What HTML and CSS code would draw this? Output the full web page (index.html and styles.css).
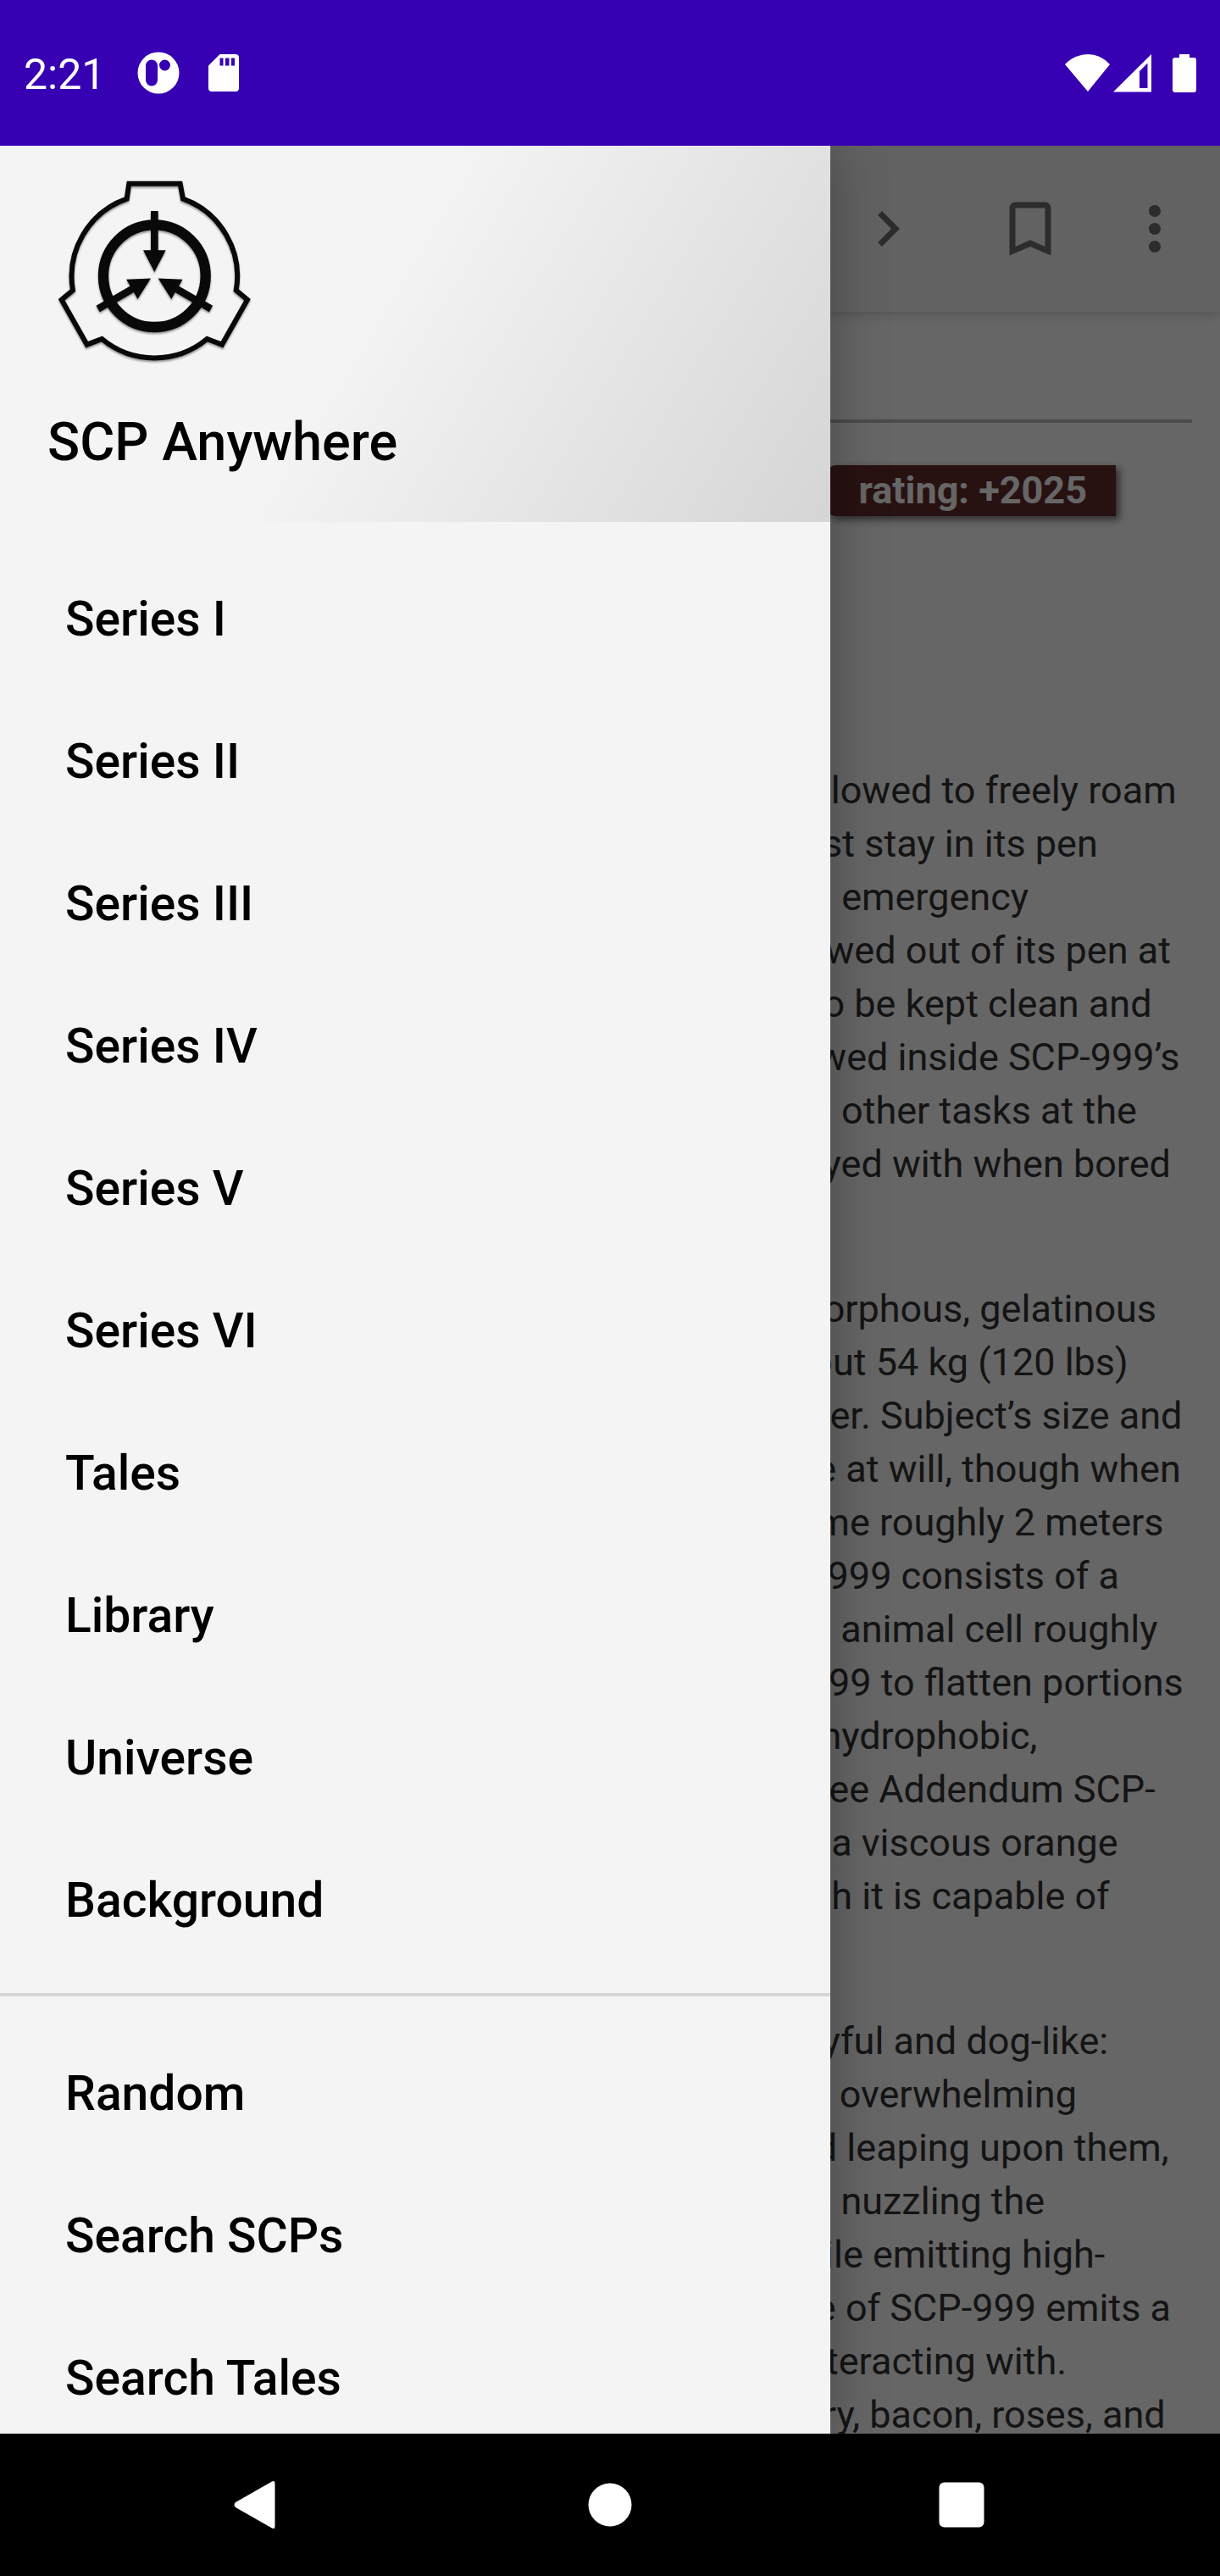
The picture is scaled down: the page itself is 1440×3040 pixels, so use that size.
FILE: index.html
```html
<!DOCTYPE html>
<html lang="en">
<head>
<meta charset="utf-8">
<meta name="viewport" content="width=device-width, initial-scale=1">
<title>SCP Anywhere</title>
<link rel="stylesheet" href="styles.css">
</head>
<body>
<header class="status">
  <span class="status-time">2:21</span>
  <svg class="status-app" width="50" height="50" viewBox="0 0 50 50" aria-hidden="true"><path fill="#fff" fill-rule="evenodd" d="M25 .5a24.500 24.500 0 1 0 0 49a24.500 24.500 0 1 0 0-49zM17 9.500a7 7 0 0 1 7 7v17a7 7 0 0 1-14 0v-17a7 7 0 0 1 7-7zM32.500 9.500a6.500 6.500 0 1 1 0 13a6.500 6.500 0 1 1 0-13z"/></svg>
  <svg class="status-card" width="36" height="46" viewBox="0 0 36 46" aria-hidden="true"><path fill="#fff" fill-rule="evenodd" d="M13.500 1H32a4 4 0 0 1 4 4V41a4 4 0 0 1-4 4H4a4 4 0 0 1-4-4V14.500zM13.500 5.500v9h4v-9zM20 5.500v9h4.500v-9zM27 5.500v9h4v-9z"/></svg>
  <span class="status-gap"></span>
  <svg width="54" height="46" viewBox="0 0 54 46" aria-hidden="true"><path fill="#fff" d="M0 13Q12 1 27 1T53 13L27 45z"/></svg>
  <svg class="status-signal" width="46" height="46" viewBox="0 0 46 46" aria-hidden="true"><path fill="#fff" fill-rule="evenodd" d="M0 45.500L45 1v44.500zM31 21v20h9.500V11.500z"/></svg>
  <svg class="status-battery" width="28" height="46" viewBox="0 0 28 46" aria-hidden="true"><path fill="#fff" d="M8 1h12v4h5a3 3 0 0 1 3 3V43a3 3 0 0 1-3 3H3a3 3 0 0 1-3-3V8a3 3 0 0 1 3-3h5z"/></svg>
</header>

<div class="stage">
  <main class="page">
    <div class="appbar">
      <button class="action" type="button" aria-label="Next"><svg width="84" height="84" viewBox="0 0 24 24"><path d="M10 6L8.590 7.410 13.170 12l-4.580 4.590L10 18l6-6z"/></svg></button>
      <button class="action" type="button" aria-label="Bookmark"><svg width="84" height="84" viewBox="0 0 24 24"><path d="M17 3H7c-1.100 0-1.990.9-1.990 2L5 21l7-3 7 3V5c0-1.100-.9-2-2-2zm0 15l-5-2.180L7 18V5h10v13z"/></svg></button>
      <button class="action action-more" type="button" aria-label="More options"><svg width="84" height="84" viewBox="0 0 24 24"><path d="M12 8c1.100 0 2-.9 2-2s-.9-2-2-2-2 .9-2 2 .9 2 2 2zm0 2c-1.100 0-2 .9-2 2s.9 2 2 2 2-.9 2-2-.9-2-2-2zm0 6c-1.100 0-2 .9-2 2s.9 2 2 2 2-.9 2-2-.9-2-2-2z"/></svg></button>
    </div>
    <article class="article">
      <h1 class="article-title">SCP-999</h1>
      <div class="article-top">
        <span class="rating">rating: +2025</span>
        <p class="article-item"><b>Item #:</b> SCP-999</p>
      </div>
      <p><b>Object Class:</b> Safe</p>
      <p><b>Special Containment Procedures:</b> SCP-999 is allowed to freely roam<br>
      the facility should it desire to, but otherwise must stay in its pen<br>
      for its own well-being. In the case of an ongoing emergency<br>
      lockdown at the facility, subject is not often allowed out of its pen at<br>
      night or off facility grounds at any time. Pen is to be kept clean and<br>
      food replaced twice daily. All personnel are allowed inside SCP-999’s<br>
      holding area, but only if they are not assigned to other tasks at the<br>
      time, or if they are on break. Subject is to be played with when bored<br>
      and spoken to in a calm, non-threatening tone.</p>
      <p><b>Description:</b> SCP-999 appears to be a large, amorphous, gelatinous<br>
      mass of translucent orange slime, weighing about 54 kg (120 lbs)<br>
      with a consistency similar to that of peanut butter. Subject’s size and<br>
      mass stay the same, but it can change its shape at will, though when<br>
      at rest, SCP-999 becomes a rounded, oblate dome roughly 2 meters<br>
      wide and 1 meter in height. The surface of SCP-999 consists of a<br>
      thin, transparent membrane similar to that of an animal cell roughly<br>
      0.5 cm thick, but is quite elastic, allowing SCP-999 to flatten portions<br>
      of its bulk up to 2 cm long. This surface is also hydrophobic,<br>
      though it can willingly absorb ordinary liquids (see Addendum SCP-<br>
      999-A). The interior of SCP-999 is composed of a viscous orange<br>
      substance with unclassified components, though it is capable of<br>
      digesting organic matter.</p>
      <p>Subject’s temperament is best described as playful and dog-like:<br>
      when approached, SCP-999 will often react with overwhelming<br>
      elation, slithering over to the nearest person and leaping upon them,<br>
      “hugging” them with a pair of pseudopods while nuzzling the<br>
      person’s face with a third pseudopod, all the while emitting high-<br>
      pitched gurgling and cooing noises. The surface of SCP-999 emits a<br>
      pleasing odor that differs with whomever it is interacting with.<br>
      Recorded scents include chocolate, fresh laundry, bacon, roses, and</p>
    </article>
  </main>
  <div class="scrim"></div>
  <aside class="drawer">
    <div class="drawer-head">
      <svg class="logo" width="240" height="220" viewBox="48 66 720 660" aria-hidden="true">
        <path fill="none" stroke="#090909" stroke-width="18" d="M329 134L337 80H518L528 134A291 291 0 0 1 716 458L756 491L666 650L613 630A291 291 0 0 1 241 630L188 650L98 491L138 458A291 291 0 0 1 329 134z"/>
        <circle cx="427" cy="407" r="181" fill="none" stroke="#090909" stroke-width="37"/>
        <g fill="#090909">
          <path d="M414 177h26v139h27l-40 77l-40-77h27z"/>
          <path transform="rotate(120 427 408)" d="M414 177h26v139h27l-40 77l-40-77h27z"/>
          <path transform="rotate(240 427 408)" d="M414 177h26v139h27l-40 77l-40-77h27z"/>
        </g>
      </svg>
      <div class="drawer-title">SCP Anywhere</div>
    </div>
    <nav class="menu">
      <a href="#">Series I</a>
      <a href="#">Series II</a>
      <a href="#">Series III</a>
      <a href="#">Series IV</a>
      <a href="#">Series V</a>
      <a href="#">Series VI</a>
      <a href="#">Tales</a>
      <a href="#">Library</a>
      <a href="#">Universe</a>
      <a href="#">Background</a>
    </nav>
    <nav class="menu menu-tools">
      <a href="#">Random</a>
      <a href="#">Search SCPs</a>
      <a href="#">Search Tales</a>
    </nav>
  </aside>
</div>

<footer class="navbar">
  <button type="button" aria-label="Back"><svg width="60" height="60" viewBox="0 0 60 60"><path fill="#fff" d="M3 27L46 2.500Q49.500 1 49.500 5V55Q49.500 59 46 57.500L3 33Q0 30 3 27z"/></svg></button>
  <button type="button" aria-label="Home"><svg width="60" height="60" viewBox="0 0 60 60"><circle cx="30" cy="30" r="25.500" fill="#fff"/></svg></button>
  <button type="button" aria-label="Recent apps"><svg width="60" height="60" viewBox="0 0 60 60"><rect x="3.500" y="3.500" width="53" height="53" rx="6" fill="#fff"/></svg></button>
</footer>
</body>
</html>
```
FILE: styles.css
```css
* {
  box-sizing: border-box;
}

body {
  margin: 0;
  height: 100vh;
  display: flex;
  flex-direction: column;
  overflow: hidden;
  font-family: Roboto, "Liberation Sans", sans-serif;
  background: #000;
}

svg {
  display: block;
  flex: none;
}

button {
  border: 0;
  padding: 0;
  background: none;
  display: flex;
  align-items: center;
  justify-content: center;
}

.status {
  flex: none;
  height: 172px;
  padding: 0 28px;
  display: flex;
  align-items: center;
  background: #3700b3;
  color: #fff;
}

.status-time {
  font-size: 50px;
  line-height: 60px;
  padding-top: 3px;
}

.status-app {
  margin-left: 38px;
}

.status-card {
  margin-left: 34px;
}

.status-gap {
  flex: 1;
}

.status-signal {
  margin-left: 3px;
}

.status-battery {
  margin-left: 24px;
}

.stage {
  position: relative;
  flex: 1;
  min-height: 0;
  overflow: hidden;
  background: #fff;
}

.page {
  height: 100%;
  overflow: hidden;
}

.appbar {
  position: relative;
  height: 196px;
  padding-right: 14px;
  display: flex;
  justify-content: flex-end;
  background: #f5f5f5;
  box-shadow: 0 2px 14px rgba(0, 0, 0, 0.2);
}

.action {
  width: 168px;
  fill: #6e6e6e;
}

.action-more {
  width: 126px;
}

.article {
  padding: 27px 33px 0 29px;
  color: #323232;
  font-size: 45px;
  line-height: 63px;
  white-space: nowrap;
}

.article p {
  margin: 0 0 45px;
}

.article-title {
  margin: 0;
  padding-bottom: 20px;
  border-bottom: 4px solid #bbb;
  font-size: 63px;
  line-height: 80px;
  font-weight: 500;
}

.article-top {
  display: flow-root;
}

.article .article-item {
  margin-top: 186px;
}

.rating {
  float: right;
  margin: 50px 90px 0 0;
  padding: 0 34px 0 38px;
  border-radius: 12px 0 0 12px;
  background: #642c2c;
  box-shadow: 4px 4px 10px rgba(0, 0, 0, 0.6);
  color: #fff;
  font-size: 45px;
  line-height: 60px;
  font-weight: 700;
}

.scrim {
  position: absolute;
  inset: 0;
  background: rgba(0, 0, 0, 0.6);
}

.drawer {
  position: absolute;
  top: 0;
  bottom: 0;
  left: 0;
  width: 980px;
  max-width: 85%;
  overflow: hidden;
  background: #f4f4f4;
  box-shadow: 0 0 64px rgba(0, 0, 0, 0.3);
  color: #000;
}

.drawer-head {
  padding: 40px 56px 54px;
  background: linear-gradient(121deg, #f4f4f4 44%, #d5d5d5);
}

.logo {
  filter: drop-shadow(0 2px 1px rgba(60, 50, 60, 0.5));
}

.drawer-title {
  margin-top: 50px;
  font-size: 63px;
  line-height: 80px;
  font-weight: 500;
}

.menu {
  padding: 31px 0 25px;
}

.menu a {
  display: block;
  padding: 0 77px;
  color: inherit;
  font-size: 57px;
  line-height: 168px;
  font-weight: 500;
  text-decoration: none;
}

.menu-tools {
  border-top: 4px solid #d5d5d5;
}

.navbar {
  flex: none;
  height: 168px;
  display: flex;
  align-items: center;
  justify-content: center;
  gap: 319px;
}

.navbar button {
  width: 96px;
  height: 96px;
}
```
